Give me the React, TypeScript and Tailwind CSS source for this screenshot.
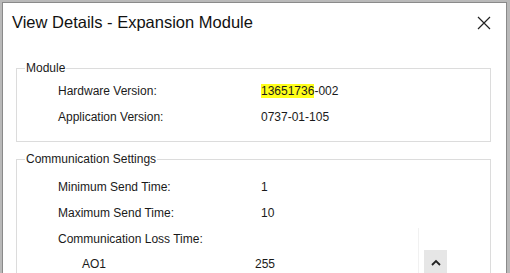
import React from 'react';

const ui = { fontFamily: '"Liberation Sans", Arial, sans-serif' };

type Row = { label: string; value?: React.ReactNode };

function Field({ label, value }: Row) {
  return (
    <div className="flex h-[26px] items-center">
      <span className="w-[203px] pl-[41px] box-content">{label}</span>
      <span>{value}</span>
    </div>
  );
}

function GroupBox({ title, className, children }: { title: string; className?: string; children: React.ReactNode }) {
  return (
    <fieldset className={`border border-[#dcdcdc] ${className ?? ''}`}>
      <legend className="ml-[8px] px-[1px] text-[12px] leading-[14px] text-[#1a1a1a]">{title}</legend>
      {children}
    </fieldset>
  );
}

export default function App() {
  return (
    <div className="w-[510px] h-[273px] overflow-hidden bg-[#b9b9b9] pt-[2px] pl-[2px] flex" style={ui}>
      <div className="w-[505px] h-[290px] border-l border-t border-r border-[#8a8a8a] bg-white flex flex-col">
        {/* title bar */}
        <div className="h-[60px] flex items-start justify-between pl-[9px] pr-[15px] pt-[7px]">
          <span className="text-[16.5px] leading-[24px] text-[#111]">View Details - Expansion Module</span>
          <svg width="14" height="14" viewBox="0 0 14 14" className="mt-[6px]">
            <path d="M1 1L13 13M13 1L1 13" stroke="#222" strokeWidth="1.2" />
          </svg>
        </div>

        <div className="pl-[13px] pr-[15px] text-[12px] text-[#1a1a1a]">
          <GroupBox title="Module" className="h-[81px] pt-[3px]">
            <Field
              label="Hardware Version:"
              value={
                <>
                  <span className="bg-[#ffff1a]">13651736</span>-002
                </>
              }
            />
            <Field label="Application Version:" value="0737-01-105" />
          </GroupBox>

          <GroupBox title="Communication Settings" className="mt-[10px] h-[140px] pt-[8px] relative">
            <Field label="Minimum Send Time:" value="1" />
            <Field label="Maximum Send Time:" value="10" />
            <Field label="Communication Loss Time:" />
            <div className="flex h-[24px] items-center">
              <span className="w-[173px] pl-[65px] box-content">AO1</span>
              <span className="w-[169px]">255</span>
              <span className="w-[23px] h-[24px] bg-[#e6e6e6] flex items-center justify-center mt-[-4px]">
                <svg width="10" height="7" viewBox="0 0 10 7">
                  <path d="M1 6L5 2L9 6" stroke="#222" strokeWidth="1.8" fill="none" />
                </svg>
              </span>
            </div>
            <div className="absolute left-[401px] top-[62px] w-px h-[60px] bg-[#f1f1f1]" />
          </GroupBox>
        </div>
      </div>
    </div>
  );
}
